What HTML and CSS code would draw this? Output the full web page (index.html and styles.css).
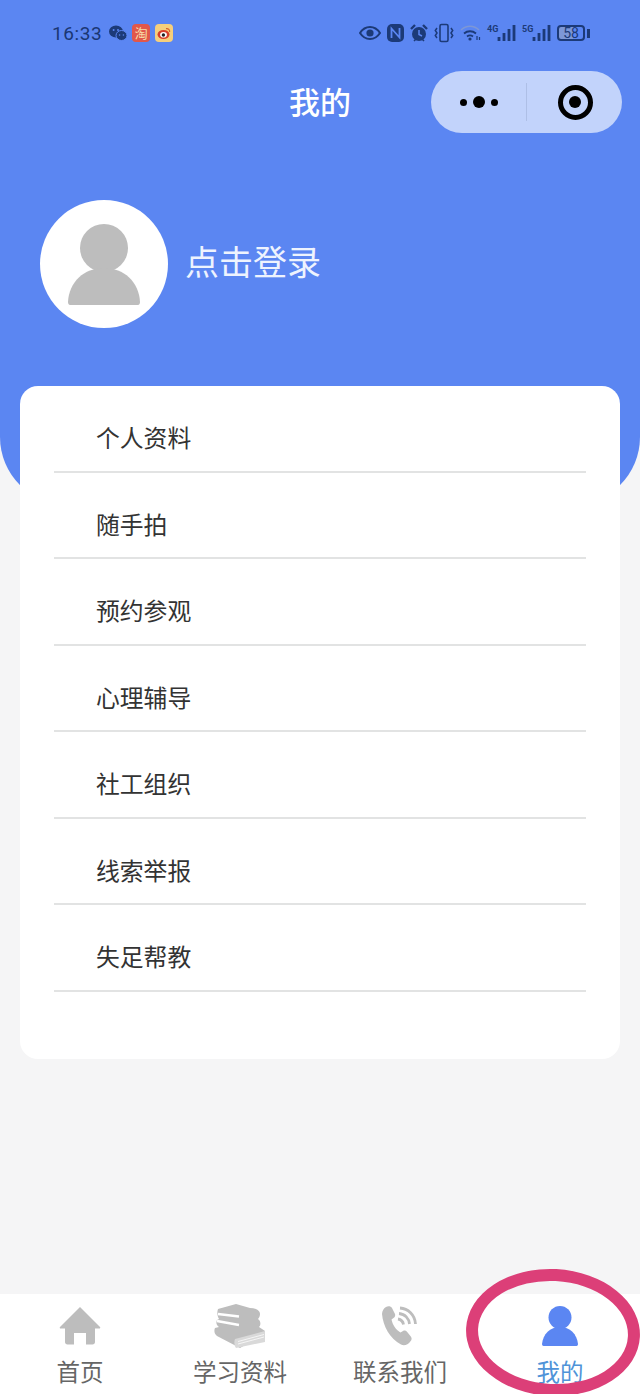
FILE: index.html
```html
<!DOCTYPE html>
<html>

<head>
    <link rel="stylesheet" href="styles.css">
    <title>我的</title>
</head>

<body>
    <div class="page">
        <div class="header">
            <div class="status-bar">
                <div class="status-left">
                    <span class="time">16:33</span>
                    <svg class="notify-icon" width="18" height="16" viewBox="0 0 18 16">
                        <ellipse cx="7" cy="6.500" rx="7" ry="6" fill="#1c3a78" />
                        <ellipse cx="12.500" cy="10.500" rx="5.500" ry="5" fill="#1c3a78" stroke="#5b86f2" stroke-width="1" />
                        <circle cx="4.600" cy="5" r="1" fill="#5b86f2" />
                        <circle cx="9" cy="5" r="1" fill="#5b86f2" />
                        <circle cx="10.600" cy="10" r="0.800" fill="#5b86f2" />
                        <circle cx="14.400" cy="10" r="0.800" fill="#5b86f2" />
                    </svg>
                    <span class="app-icon taobao">淘</span>
                    <svg class="app-icon" width="18" height="18" viewBox="0 0 18 18">
                        <rect width="18" height="18" rx="4" fill="#f6cf7c" />
                        <ellipse cx="8.500" cy="10.500" rx="6" ry="4.600" fill="#d8402c" />
                        <ellipse cx="8.500" cy="10.800" rx="3.400" ry="2.800" fill="#fff" />
                        <circle cx="8.400" cy="11" r="1.700" fill="#222" />
                        <path d="M11 4.600c2.400-.4 4 1.200 3.600 3.400" fill="none" stroke="#d8602c" stroke-width="1.200" />
                    </svg>
                </div>
                <div class="status-right">
                    <svg width="22" height="14" viewBox="0 0 22 14">
                        <path d="M1 7c2.600-4 6-6 10-6s7.400 2 10 6c-2.600 4-6 6-10 6S3.600 11 1 7z" fill="none" stroke="#1c3a78" stroke-width="2" />
                        <circle cx="11" cy="7" r="3.600" fill="#1c3a78" />
                    </svg>
                    <svg width="17" height="18" viewBox="0 0 17 18">
                        <rect width="17" height="18" rx="5" fill="#1c3a78" />
                        <path d="M4.500 14V4.500L12.500 13.500V4" fill="none" stroke="#5b86f2" stroke-width="1.800" />
                    </svg>
                    <svg width="18" height="18" viewBox="0 0 18 18">
                        <circle cx="9" cy="10" r="7" fill="#1c3a78" />
                        <path d="M9 6v4.500l3 1.500" fill="none" stroke="#5b86f2" stroke-width="1.500" />
                        <path d="M1 5l4-4M17 5l-4-4" stroke="#1c3a78" stroke-width="2.400" />
                        <path d="M4 17l2-2M14 17l-2-2" stroke="#1c3a78" stroke-width="1.600" />
                    </svg>
                    <svg width="20" height="20" viewBox="0 0 20 20">
                        <rect x="6" y="1.500" width="8" height="17" rx="1.500" fill="none" stroke="#1c3a78" stroke-width="1.600" />
                        <path d="M3 5L1.300 7.500 3 10 1.300 12.500 3 15M17 5l1.700 2.500L17 10l-0 0 1.700 2.500L17 15" fill="none" stroke="#1c3a78" stroke-width="1.500" />
                    </svg>
                    <svg width="21" height="16" viewBox="0 0 21 16">
                        <path d="M1 5c5-5 13-5 18 0" fill="none" stroke="#7d97d6" stroke-width="1.600" />
                        <path d="M4 8.500c3.500-3 8.500-3 12 0" fill="none" stroke="#1c3a78" stroke-width="1.800" />
                        <path d="M7 11.500c2-1.500 4-1.500 6 0" fill="none" stroke="#1c3a78" stroke-width="1.800" />
                        <circle cx="10" cy="14" r="1.600" fill="#1c3a78" />
                        <path d="M17 11v4M19.500 12v3" stroke="#1c3a78" stroke-width="1.200" />
                    </svg>
                    <div class="signal">
                        <span class="net-label">4G</span>
                        <svg width="19" height="16" viewBox="0 0 19 16">
                            <path d="M2 12v4M7 8v8M12 4v12M17 0v16" stroke="#1c3a78" stroke-width="2.800" />
                        </svg>
                    </div>
                    <div class="signal">
                        <span class="net-label">5G</span>
                        <svg width="19" height="16" viewBox="0 0 19 16">
                            <path d="M2 12v4M7 8v8M12 4v12M17 0v16" stroke="#1c3a78" stroke-width="2.800" />
                        </svg>
                    </div>
                    <div class="battery">
                        <div class="battery-body">58</div>
                        <div class="battery-tip"></div>
                    </div>
                </div>
            </div>

            <div class="nav-bar">
                <div></div>
                <div class="nav-title">我的</div>
                <div class="capsule">
                    <div class="capsule-dots">
                        <span class="dot"></span>
                        <span class="dot dot-big"></span>
                        <span class="dot"></span>
                    </div>
                    <div class="capsule-line"></div>
                    <div class="capsule-target"><span></span></div>
                </div>
            </div>

            <div class="profile">
                <div class="avatar">
                    <svg width="72" height="81" viewBox="0 0 72 81">
                        <circle cx="36" cy="24" r="24" fill="#bdbdbd" />
                        <path d="M0 78C1 58 16 44 36 44s35 14 36 34c0 2-1 3-2 3H2c-1 0-2-1-2-3z" fill="#bdbdbd" />
                    </svg>
                </div>
                <div class="login-text">点击登录</div>
            </div>
        </div>

        <div class="menu-card">
            <div class="menu-item">个人资料</div>
            <div class="menu-item">随手拍</div>
            <div class="menu-item">预约参观</div>
            <div class="menu-item">心理辅导</div>
            <div class="menu-item">社工组织</div>
            <div class="menu-item">线索举报</div>
            <div class="menu-item">失足帮教</div>
        </div>

        <div class="tab-bar">
            <div class="tab">
                <svg class="tab-icon" width="42" height="40" viewBox="0 0 42 40">
                    <path d="M21 1L41 21c.6.8.2 1.600-.8 1.600H36V36c0 1.500-1 2.500-2.500 2.500H27V27h-12v11.500H8.500C7 38.500 6 37.500 6 36V22.600H1.800c-1 0-1.400-.8-.8-1.600z" fill="#bdbdbd" />
                </svg>
                <span>首页</span>
            </div>
            <div class="tab">
                <svg class="tab-icon" width="52" height="46" viewBox="0 0 52 46">
                    <path d="M4 6L22 1l14 4c5 0 10 2 10 6 0 2-1 4-2 5 3 2 3 6 1 8l6 4v2L26 45 3 33C0 31 0 27 1 25l4-1c-3-2-3-5-2-7l2-1c-2-3-2-7-1-10z" fill="#bdbdbd" />
                    <path d="M4 11l21 2.500M3 18l22 4" stroke="#fff" stroke-width="2.600" />
                    <path d="M21 36l30-8v11l-29 6c-2-3-2-6-1-9z" fill="#d9d9d9" />
                    <path d="M24 38.500l26-7M24 41l26-7" stroke="#f5f5f5" stroke-width="1" />
                </svg>
                <span>学习资料</span>
            </div>
            <div class="tab">
                <svg class="tab-icon" width="36" height="40" viewBox="0 0 36 40">
                    <path d="M4 1c2-1.500 5-1 6 1l3 6c.5 1.500 0 3-1.500 4l-2 1.500c1 5 4 10 9 13l2.500-1.500c1.500-.8 3-.5 4 .8l4 5c1 1.500.8 3-.5 4.500C26 39 22 40 19 38.500 8 33 1 20 0 8c0-3 2-6 4-7z" fill="#bdbdbd" />
                    <path d="M16 13c3 .5 5 2.500 5.500 5.500M17 7.500c6 .5 10 5 10.500 10.500M18 2c8 .5 15 7 15.500 16" fill="none" stroke="#bdbdbd" stroke-width="2.800" />
                </svg>
                <span>联系我们</span>
            </div>
            <div class="tab tab-active">
                <svg class="tab-icon" width="36" height="40" viewBox="0 0 36 40">
                    <circle cx="18" cy="11.500" r="11.500" fill="#5b86f2" />
                    <path d="M0 38C1 28 8 21 18 21s17 7 18 17c0 1-.7 2-1.500 2h-33C.7 40 0 39 0 38z" fill="#5b86f2" />
                </svg>
                <span>我的</span>
            </div>
        </div>

        <div class="circle-mark"></div>
    </div>
</body>

</html>
```
FILE: styles.css
```css
* {
    box-sizing: border-box;
}

body {
    font-family: "Noto Sans CJK SC", "Liberation Sans", sans-serif;
    margin: 0;
    padding: 0;
    background-color: #f5f5f6;
}

.page {
    position: relative;
    width: 640px;
    height: 1394px;
    overflow: hidden;
    display: flex;
    flex-direction: column;
}

.header {
    height: 505px;
    flex-shrink: 0;
    background-color: #5b86f2;
    border-radius: 0 0 68px 68px;
}

.status-bar {
    height: 71px;
    padding: 20px 50px 0 52px;
    display: flex;
    justify-content: space-between;
    align-items: flex-start;
}

.status-left,
.status-right {
    display: flex;
    align-items: center;
    height: 26px;
}

.status-left {
    gap: 5px;
}

.status-right {
    gap: 6px;
}

.time {
    font-family: Roboto, sans-serif;
    font-size: 19px;
    letter-spacing: 0.6px;
    color: #1a3673;
    margin-right: 2px;
}

.taobao {
    width: 18px;
    height: 18px;
    border-radius: 4px;
    background-color: #e2574a;
    color: #f6dfa8;
    font-size: 13px;
    line-height: 18px;
    text-align: center;
}

.signal {
    display: flex;
    align-items: flex-start;
    width: 29px;
}

.net-label {
    width: 10px;
    font-family: Roboto, sans-serif;
    font-size: 9px;
    font-weight: 700;
    line-height: 9px;
    color: #1c3a78;
    white-space: nowrap;
}

.battery {
    display: flex;
    align-items: center;
    gap: 2px;
}

.battery-body {
    width: 28px;
    height: 16px;
    border: 2px solid #1c3a78;
    border-radius: 4px;
    font-family: Roboto, sans-serif;
    font-size: 14px;
    line-height: 12px;
    text-align: center;
    color: #1c3a78;
    background: linear-gradient(to right, #7d97d6 58%, transparent 58%);
}

.battery-tip {
    width: 3px;
    height: 9px;
    background-color: #1c3a78;
}

.nav-bar {
    display: grid;
    grid-template-columns: 1fr auto 1fr;
    align-items: center;
    padding: 0 18px;
    height: 62px;
}

.nav-title {
    font-size: 31px;
    font-weight: 500;
    color: #fff;
    line-height: 62px;
    margin-top: -3px;
}

.capsule {
    justify-self: end;
    width: 191px;
    height: 62px;
    border-radius: 31px;
    background-color: #c2d3fb;
    display: flex;
    align-items: center;
}

.capsule-dots {
    width: 95px;
    display: flex;
    justify-content: center;
    align-items: center;
    gap: 6px;
}

.dot {
    width: 7px;
    height: 7px;
    border-radius: 50%;
    background-color: #000;
}

.dot-big {
    width: 12px;
    height: 12px;
}

.capsule-line {
    width: 1px;
    height: 38px;
    background-color: #aebfe6;
}

.capsule-target {
    flex: 1;
    display: flex;
    justify-content: center;
    padding-left: 1px;
}

.capsule-target span {
    width: 35px;
    height: 35px;
    border-radius: 50%;
    border: 5px solid #000;
    display: flex;
    justify-content: center;
    align-items: center;
}

.capsule-target span::after {
    content: "";
    width: 12px;
    height: 12px;
    border-radius: 50%;
    background-color: #000;
}

.profile {
    margin-top: 67px;
    padding-left: 40px;
    display: flex;
    align-items: center;
    gap: 17px;
}

.avatar {
    width: 128px;
    height: 128px;
    border-radius: 50%;
    background-color: #fff;
    display: flex;
    justify-content: center;
    align-items: center;
}

.login-text {
    font-size: 34px;
    color: #eef3fe;
    margin-top: -8px;
}

.menu-card {
    margin: -119px 20px 0;
    height: 673px;
    flex-shrink: 0;
    position: relative;
    background-color: #fff;
    border-radius: 18px;
    padding: 0 34px;
}

.menu-item {
    height: 86.500px;
    padding: 0 0 0 42px;
    border-bottom: 2px solid #e2e3e3;
    font-size: 23.800px;
    line-height: 102px;
    color: #333;
}

.tab-bar {
    margin-top: auto;
    height: 100px;
    flex-shrink: 0;
    background-color: #fff;
    display: flex;
}

.tab {
    flex: 1;
    display: flex;
    flex-direction: column;
    align-items: center;
    font-size: 23.500px;
    line-height: 30px;
    color: #666;
}

.tab-icon {
    height: 46px;
    margin-top: 9px;
    margin-bottom: 7px;
}

.tab-active {
    color: #4f93d8;
}

.circle-mark {
    position: absolute;
    left: 466px;
    top: 1269px;
    width: 174px;
    height: 127px;
    border: 12px solid #dc3f78;
    border-radius: 50%;
    transform: rotate(3deg);
}
```
